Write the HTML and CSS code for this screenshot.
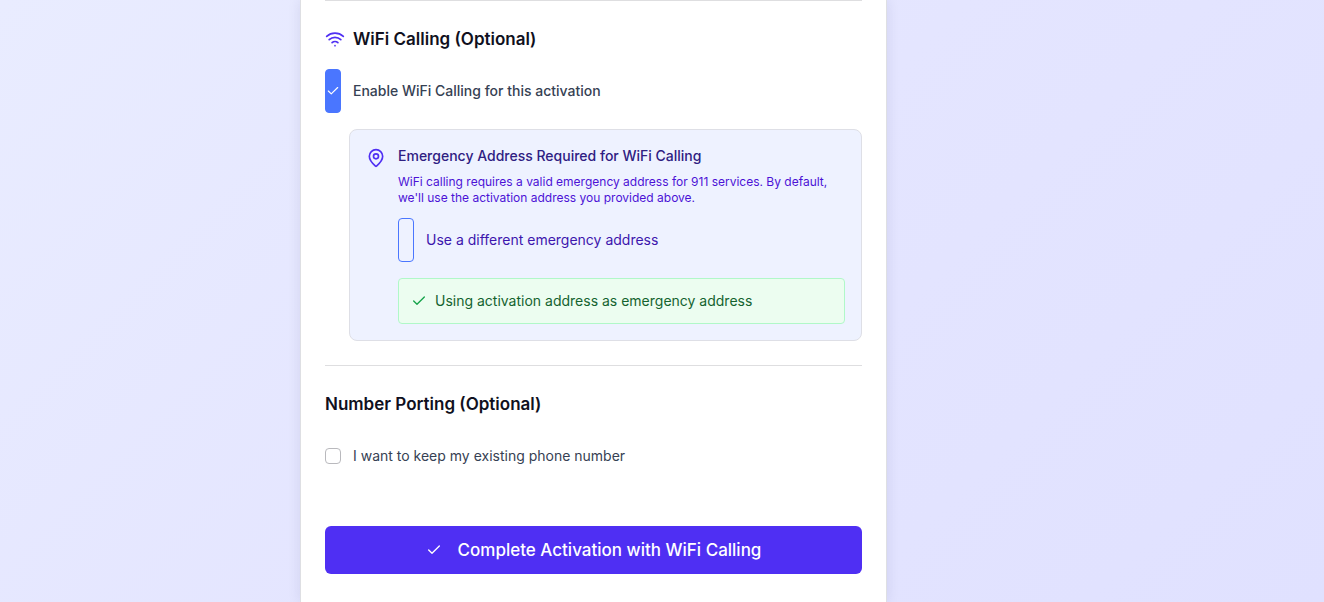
FILE: index.html
```html
<!DOCTYPE html>
<html lang="en">
<head>
<meta charset="utf-8">
<meta name="viewport" content="width=device-width, initial-scale=1">
<title>Activation</title>
<link rel="stylesheet" href="styles.css">
</head>
<body>
<main class="page">
  <form class="card">
    <section class="section">
      <h2 class="heading">
        <svg class="icon icon-lg" viewBox="0 0 24 24" aria-hidden="true"><path d="M12 20h.01"/><path d="M2 8.82a15 15 0 0 1 20 0"/><path d="M5 12.859a10 10 0 0 1 14 0"/><path d="M8.5 16.429a5 5 0 0 1 7 0"/></svg>
        WiFi Calling (Optional)
      </h2>
      <div class="option">
        <span class="tall-check">
          <input class="tall-box" type="checkbox" id="wifi" checked>
          <svg class="icon tick" viewBox="0 0 24 24" aria-hidden="true"><path d="M20 6 9 17l-5-5"/></svg>
        </span>
        <label class="label label-strong" for="wifi">Enable WiFi Calling for this activation</label>
      </div>
      <div class="panel">
        <svg class="icon icon-lg pin" viewBox="0 0 24 24" aria-hidden="true"><path d="M20 10c0 4.993-5.539 10.193-7.399 11.799a1 1 0 0 1-1.202 0C9.539 20.193 4 14.993 4 10a8 8 0 0 1 16 0"/><circle cx="12" cy="10" r="3"/></svg>
        <div class="panel-body">
          <h3 class="panel-title">Emergency Address Required for WiFi Calling</h3>
          <p class="panel-text">WiFi calling requires a valid emergency address for 911 services. By default, we'll use the activation address you provided above.</p>
          <div class="option">
            <span class="tall-check">
              <input class="tall-box" type="checkbox" id="different">
              <svg class="icon tick" viewBox="0 0 24 24" aria-hidden="true"><path d="M20 6 9 17l-5-5"/></svg>
            </span>
            <label class="label label-indigo" for="different">Use a different emergency address</label>
          </div>
          <div class="notice">
            <svg class="icon" viewBox="0 0 24 24" aria-hidden="true"><path d="M20 6 9 17l-5-5"/></svg>
            <span class="notice-text">Using activation address as emergency address</span>
          </div>
        </div>
      </div>
    </section>
    <section class="section">
      <h2 class="heading">Number Porting (Optional)</h2>
      <div class="option porting">
        <input class="box" type="checkbox" id="port">
        <label class="label" for="port">I want to keep my existing phone number</label>
      </div>
    </section>
    <button class="submit" type="submit">
      <svg class="icon" viewBox="0 0 24 24" aria-hidden="true"><path d="M20 6 9 17l-5-5"/></svg>
      Complete Activation with WiFi Calling
    </button>
  </form>
</main>
</body>
</html>
```
FILE: styles.css
```css
* { box-sizing: border-box; }
body {
  margin: 0;
  font-family: Inter, "Liberation Sans", sans-serif;
  font-size: 14px;
  line-height: 20px;
  color: #364153;
  background: linear-gradient(135deg, #e9ecff, #e4e5ff 50%, #e0e1ff);
}
h2, h3, p { margin: 0; }
.page {
  display: grid;
  grid-template-columns: 300fr 587fr 437fr;
  min-height: 100vh;
}
.card {
  grid-column: 2;
  min-width: 0;
  padding: 0 24px 24px;
  background: #fff;
  border: solid #dedfe3;
  border-width: 0 1px;
  box-shadow: 0 0 12px rgba(40, 40, 90, 0.1);
}
.section {
  display: flex;
  flex-direction: column;
  gap: 16px;
  padding: 24px 0;
  border-top: 1px solid #dedee0;
}
.heading {
  display: flex;
  align-items: center;
  gap: 8px;
  font-size: 17px;
  line-height: 28px;
  font-weight: 600;
  color: #101020;
}
.icon {
  flex: none;
  width: 16px;
  height: 16px;
  fill: none;
  stroke: currentColor;
  stroke-width: 2;
  stroke-linecap: round;
  stroke-linejoin: round;
}
.icon-lg {
  width: 20px;
  height: 20px;
  color: #4f2ff3;
}
.option {
  display: flex;
  align-items: center;
  gap: 12px;
}
.tall-check {
  display: grid;
  place-items: center;
  width: 16px;
  height: 44px;
}
.tall-check > * { grid-area: 1 / 1; }
.tall-box {
  appearance: none;
  width: 16px;
  height: 44px;
  margin: 0;
  border: 1px solid #4a76ff;
  border-radius: 4px;
}
.tall-box:checked { background: #4a76ff; }
.tick {
  width: 14px;
  height: 14px;
  color: #fff;
  pointer-events: none;
  visibility: hidden;
}
.tall-box:checked + .tick { visibility: visible; }
.label-strong { font-weight: 500; }
.label-indigo { color: #3d16ad; }
.panel {
  display: flex;
  gap: 12px;
  margin-left: 24px;
  padding: 16px;
  background: #eef2ff;
  border: 1px solid #dedfe6;
  border-radius: 8px;
}
.pin { margin-top: 2px; }
.panel-body {
  flex: 1;
  min-width: 0;
}
.panel-title {
  font-size: 14px;
  font-weight: 500;
  color: #2f2082;
}
.panel-text {
  margin: 8px 0 12px;
  font-size: 12px;
  line-height: 16px;
  color: #4c12d6;
}
.notice {
  display: flex;
  align-items: center;
  gap: 8px;
  margin-top: 16px;
  padding: 12px;
  color: #16a34a;
  background: #ecfdf0;
  border: 1px solid #b0f8c8;
  border-radius: 4px;
}
.notice-text { color: #14632f; }
.porting { margin-top: 12px; }
.box {
  appearance: none;
  width: 16px;
  height: 16px;
  margin: 0;
  background: #fff;
  border: 1px solid #b9b9bd;
  border-radius: 4px;
}
.box:checked { background: #4a76ff; }
.submit {
  display: flex;
  align-items: center;
  justify-content: center;
  gap: 16px;
  width: 100%;
  min-height: 48px;
  margin-top: 36px;
  padding: 8px 16px;
  font: 500 17px/28px Inter, "Liberation Sans", sans-serif;
  color: #fff;
  background: #4f2ff3;
  border: 0;
  border-radius: 6px;
}
```
